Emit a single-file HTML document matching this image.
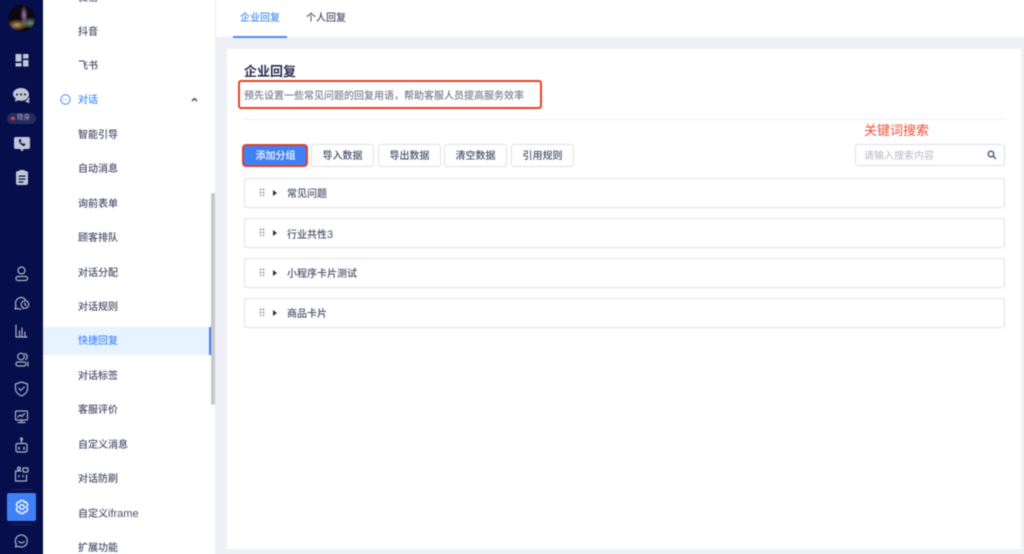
<!DOCTYPE html>
<html lang="zh"><head><meta charset="utf-8"><title>企业回复</title>
<style>
html,body{margin:0;padding:0;overflow:hidden}
body{width:1024px;height:554px;position:relative;background:#eff0f5;font-family:"Liberation Sans","Noto Sans CJK SC",sans-serif}
#w{position:absolute;left:0;top:0;width:1024px;height:554px;filter:blur(.5px)}
.a{position:absolute}
#rail{left:-6px;top:-6px;width:49px;height:566px;background:#060f4b}
#menu{left:43px;top:-6px;width:172px;height:566px;background:#fff}
.m{position:absolute;left:78px;font-size:10px;line-height:14px;color:#4b4f6b;white-space:nowrap;font-weight:500}
.btn{position:absolute;top:144px;width:63px;height:23px;box-sizing:border-box;border:1px solid #dfe0ea;border-radius:3px;background:#fff;font-size:10px;line-height:23px;text-align:center;color:#4b4f6b;font-weight:500}
.row{position:absolute;left:244px;width:761px;height:30px;box-sizing:border-box;border:1px solid #dfe0ea;border-radius:3px;background:#fff}
.row b{position:absolute;left:42px;top:9px;font-weight:500;font-size:10px;line-height:14px;color:#4b4f6b;white-space:nowrap}
.tri{position:absolute;left:28px;top:11px;width:0;height:0;border-left:4px solid #2b2f55;border-top:3px solid transparent;border-bottom:3px solid transparent}
.dots{position:absolute;left:14px;top:9px;width:6px;height:8px;background-image:radial-gradient(circle,#9a9cae 0.8px,transparent 1px);background-size:3px 3px}
svg.i{position:absolute;left:0;top:0}
</style></head><body><div id="w">
<div class="a" id="rail"></div>
<div class="a" id="menu"></div>

<div class="a" style="left:8px;top:5px;width:27px;height:27px;border-radius:50%;background:radial-gradient(ellipse 4px 10px at 16px 10px,#a678a8 0,transparent 100%),radial-gradient(ellipse 11px 6px at 9px 20px,#c59a5c 0,transparent 100%),radial-gradient(ellipse 10px 6px at 22px 18px,#6f8d78 0,transparent 100%),#0a0810"></div>

<svg class="i" width="43" height="554" viewBox="0 0 43 554" fill="none" stroke="#aeb2ca" stroke-width="1.2" stroke-linecap="round" stroke-linejoin="round">
<g fill="#c3c6d6" stroke="none">
<rect x="15.500" y="54" width="6" height="7.500"/><rect x="23" y="54" width="5.500" height="4.500"/><rect x="15.500" y="63" width="6" height="3.500"/><rect x="23" y="60" width="5.500" height="6.500"/>
<path d="M21 88c5 0 8 3 8 6.500 0 .8-.2 1.500-.5 2.200-1.500 2.800-4 4-7.500 4-1 0-2 0-3-.5l-3 1.500 .5-3.500c-1.500-1-2.500-2.200-2.500-4.200 0-3.500 3.500-6 8-6z"/>
<path d="M25 102l3 .5 1.500 1-.5-3 .8-2.500-.5-.5z"/>
<path d="M16 137h12a2 2 0 0 1 2 2v8a2 2 0 0 1-2 2h-4l-2 2.500-2-2.500h-4a2 2 0 0 1-2-2v-8a2 2 0 0 1 2-2z"/>
<path d="M18 171h8a2 2 0 0 1 2 2v10a2 2 0 0 1-2 2H18a2 2 0 0 1-2-2v-10a2 2 0 0 1 2-2z"/>
<rect x="19" y="170" width="6" height="3" rx="1"/>
</g>
<g fill="#060f4b" stroke="none"><circle cx="17" cy="94.500" r="1"/><circle cx="21" cy="94.500" r="1"/><circle cx="25" cy="94.500" r="1"/>
<rect x="18.500" y="175.500" width="7" height="1.200"/><rect x="18.500" y="178.500" width="7" height="1.200"/><rect x="18.500" y="181.500" width="5" height="1.200"/></g>
<path d="M19 139.500c-.5 3 2.500 6.500 5.500 6.500l1-1.800-2-1-1 .8c-.8-.5-1.500-1.300-1.800-2.200l.8-1-1-1.800z" fill="#060f4b" stroke="none"/>

<circle cx="21.500" cy="270.500" r="3.500"/><rect x="16" y="276.500" width="11.500" height="4" rx="1.800"/>
<path d="M23 308.500a6.300 6.300 0 0 0 .5-.2M21 297.500a6 6 0 0 0-5 8.500l-1 3 3-.5c1 .5 2 .8 3 .8"/><path d="M21 297.500c2 0 3.500 1 4.500 2.500"/><circle cx="25" cy="304.500" r="3.800"/><path d="M25 303v1.700l1.200.8"/>
<path d="M16 325v12h11M19.500 336v-5M22 336v-8M25 336v-4"/>
<circle cx="21" cy="356.500" r="3.300"/><rect x="16" y="362" width="10" height="4" rx="1.800"/><path d="M25 353.500a3.500 3.500 0 0 1 .8 6M28 362v4"/>
<path d="M21.500 382l6 2v5c0 3.500-3 5.500-6 7-3-1.500-6-3.500-6-7v-5z"/><path d="M18.800 388.500l2 2 3.500-3.500"/>
<rect x="15.500" y="411" width="12" height="9" rx="1"/><path d="M21.500 420v2.500M18 422.500h7M18 417l2-2 2 1.500 2.500-3"/>
<rect x="16" y="443.500" width="11" height="8.500" rx="1.500"/><path d="M21.500 443.500v-3"/><circle cx="21.500" cy="439" r="1"/>
<path d="M19 447.500v1.500M24 447.500v1.500" stroke-width="1.600"/>
<path d="M21 471h-5.500v10h11v-6"/><circle cx="19" cy="468.500" r="1.400"/><rect x="23" y="468" width="5" height="4" rx=".7"/><path d="M19 475.500v1.300M23 475.500v1.300"/>
<path d="M21.500 535a6 6 0 1 1-3 11.300l-3 .7 .8-2.800a6 6 0 0 1 5.200-9.200z"/><path d="M18.800 541.500c1.500 1.800 4 1.800 5.500 0"/>
<path d="M11 489.500h21M11 524.500h21" stroke="#1d2560" stroke-width="1"/>
</svg>

<div class="a" style="left:7px;top:112.500px;width:29px;height:11px;border-radius:6px;background:#262d5e"></div>
<div class="a" style="left:11px;top:116.500px;width:3.500px;height:3.500px;border-radius:50%;background:#e8432e"></div>
<div class="a" style="left:17px;top:114px;font-size:6.500px;line-height:8px;color:#aeb1c6;white-space:nowrap">隐身</div>

<div class="a" style="left:7px;top:493px;width:29px;height:28px;border-radius:2px;background:#4080f5"></div>
<svg class="a" style="left:14px;top:499px" width="16" height="16" viewBox="0 0 16 16" fill="none" stroke="#fff" stroke-width="1.300" stroke-linejoin="round"><path d="M6.300 1.500h3.400l.6 2 1.900-.6 1.700 3-1.500 1.500.1.600-.1.600 1.500 1.500-1.700 3-1.900-.6-.6 2H6.300l-.6-2-1.900.6-1.700-3L3.600 8.600 3.500 8l.1-.6L2.100 5.900l1.700-3 1.900.6z"/><circle cx="8" cy="8" r="2.300"/></svg>

<div class="m" style="top:-8px">微信</div>
<div class="m" style="top:26px">抖音</div>
<div class="m" style="top:60px">飞书</div>
<svg class="a" style="left:60px;top:94px" width="11" height="11" viewBox="0 0 11 11" fill="none"><circle cx="5.500" cy="5.500" r="4.700" stroke="#4a8cf7" stroke-width="1"/><path d="M3.200 5.500h.8M5.100 5.500h.8M7 5.500h.8" stroke="#4a8cf7" stroke-width="1"/></svg>
<div class="m" style="top:94px;color:#4a8cf7">对话</div>
<svg class="a" style="left:191px;top:97px" width="7" height="5" viewBox="0 0 7 5" fill="none"><path d="M1 4l2.500-2.500L6 4" stroke="#33375a" stroke-width="1.300"/></svg>
<div class="m" style="top:129px">智能引导</div>
<div class="m" style="top:163px">自动消息</div>
<div class="m" style="top:198px">询前表单</div>
<div class="m" style="top:232px">顾客排队</div>
<div class="m" style="top:267px">对话分配</div>
<div class="m" style="top:301px">对话规则</div>
<div class="a" style="left:43px;top:327px;width:167px;height:28px;background:#e7f3ff"></div>
<div class="a" style="left:208.500px;top:327px;width:2px;height:28px;background:#4080f5"></div>
<div class="m" style="top:335px;color:#4a8cf7">快捷回复</div>
<div class="m" style="top:370px">对话标签</div>
<div class="m" style="top:404px">客服评价</div>
<div class="m" style="top:439px">自定义消息</div>
<div class="m" style="top:473px">对话防刷</div>
<div class="m" style="top:507px">自定义<span style="font-size:11px">iframe</span></div>
<div class="m" style="top:542px">扩展功能</div>
<div class="a" style="left:210.500px;top:193px;width:4px;height:212px;border-radius:2px;background:#c9c9cc"></div>

<div class="a" style="left:216px;top:-6px;width:814px;height:43px;background:#fff"></div>
<div class="a" style="left:240px;top:12px;font-size:10px;line-height:14px;color:#4a8cf7;font-weight:500">企业回复</div>
<div class="a" style="left:306px;top:12px;font-size:10px;line-height:14px;color:#4b4f6b;font-weight:500">个人回复</div>
<div class="a" style="left:233px;top:36px;width:54px;height:1.500px;background:#4a8cf7"></div>

<div class="a" style="left:227px;top:49px;width:794px;height:500px;background:#fff"></div>
<div class="a" style="left:244px;top:63px;font-size:13px;line-height:18px;font-weight:700;color:#2b2f4f;white-space:nowrap">企业回复</div>
<div class="a" style="left:244px;top:90px;font-size:10px;line-height:14px;color:#7b7e92;white-space:nowrap;font-weight:500">预先设置一些常见问题的回复用语，帮助客服人员提高服务效率</div>
<div class="a" style="left:238px;top:80px;width:304px;height:29px;box-sizing:border-box;border:2px solid #e5432a;border-radius:3px"></div>
<div class="a" style="left:244px;top:119px;width:761px;height:1px;background:#f0f0f4"></div>
<div class="a" style="left:864px;top:122px;font-size:13px;line-height:18px;color:#f0503a;white-space:nowrap">关键词搜索</div>

<div class="btn" style="left:244px;background:#4080f5;border-color:#4080f5;color:#fff">添加分组</div>
<div class="a" style="left:242px;top:144px;width:66px;height:23px;box-sizing:border-box;border:2px solid #e0402c;border-radius:4px"></div>
<div class="btn" style="left:311px">导入数据</div>
<div class="btn" style="left:378px">导出数据</div>
<div class="btn" style="left:444px">清空数据</div>
<div class="btn" style="left:511px">引用规则</div>

<div class="a" style="left:855px;top:144px;width:150px;height:22px;box-sizing:border-box;border:1px solid #dfe0ea;border-radius:3px;background:#fff"></div>
<div class="a" style="left:864px;top:150px;font-size:10px;line-height:14px;color:#b9bac6;white-space:nowrap">请输入搜索内容</div>
<svg class="a" style="left:987px;top:150px" width="10" height="10" viewBox="0 0 10 10" fill="none" stroke="#4b4f76" stroke-width="1.300"><circle cx="4" cy="4" r="2.800"/><path d="M6.200 6.200L9 9"/></svg>

<div class="row" style="top:178px"><i class="dots"></i><i class="tri"></i><b>常见问题</b></div>
<div class="row" style="top:218px"><i class="dots"></i><i class="tri"></i><b>行业共性<span style="font-size:11px">3</span></b></div>
<div class="row" style="top:258px"><i class="dots"></i><i class="tri"></i><b>小程序卡片测试</b></div>
<div class="row" style="top:298px"><i class="dots"></i><i class="tri"></i><b>商品卡片</b></div>
</div></body></html>
